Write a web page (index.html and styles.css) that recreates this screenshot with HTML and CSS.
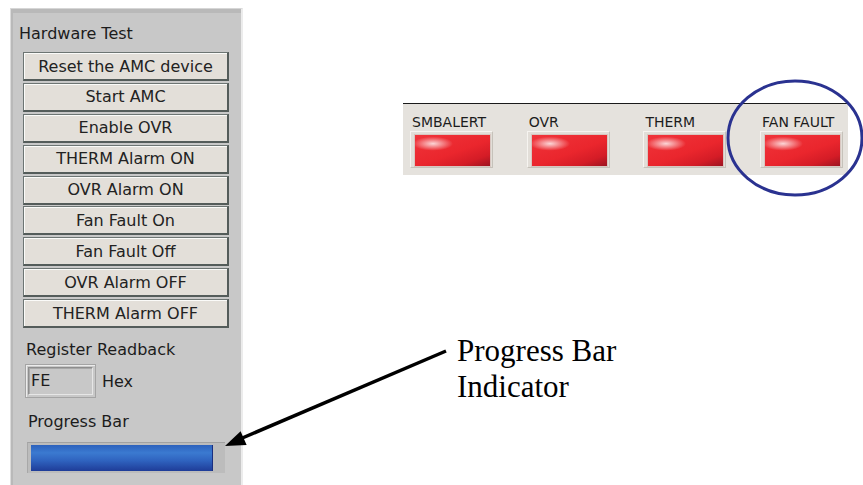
FILE: index.html
```html
<!DOCTYPE html>
<html lang="en">
<head>
    <meta charset="UTF-8">
    <title>Hardware Test</title>
    <link rel="stylesheet" href="styles.css">
</head>
<body>

<div class="panel">
    <div class="title">Hardware Test</div>
    <div class="buttons">
        <button>Reset the AMC device</button>
        <button>Start AMC</button>
        <button>Enable OVR</button>
        <button>THERM Alarm ON</button>
        <button>OVR Alarm ON</button>
        <button>Fan Fault On</button>
        <button>Fan Fault Off</button>
        <button>OVR Alarm OFF</button>
        <button>THERM Alarm OFF</button>
    </div>
    <div class="label readback">Register Readback</div>
    <div class="readrow">
        <div class="textbox"><div class="textbox-inner">FE</div></div>
        <span class="unit">Hex</span>
    </div>
    <div class="label progress-label">Progress Bar</div>
    <div class="track"><div class="fill"></div></div>
</div>

<div class="right">
    <div class="statusbar">
        <div class="cell"><div class="led-label">SMBALERT</div><div class="led-frame"><div class="led"></div></div></div>
        <div class="cell"><div class="led-label">OVR</div><div class="led-frame"><div class="led"></div></div></div>
        <div class="cell"><div class="led-label">THERM</div><div class="led-frame"><div class="led"></div></div></div>
        <div class="cell"><div class="led-label">FAN FAULT</div><div class="led-frame"><div class="led"></div></div></div>
    </div>
    <div class="note">Progress Bar<br>Indicator</div>
</div>

<svg class="overlay" width="863" height="485" viewBox="0 0 863 485">
    <ellipse cx="795" cy="138" rx="67" ry="57" fill="none" stroke="#2a3290" stroke-width="3"/>
    <line x1="446" y1="351" x2="240" y2="439" stroke="#000" stroke-width="3.5"/>
    <polygon points="225,446 240.6,431.2 246.6,445" fill="#000"/>
</svg>

</body>
</html>
```

FILE: styles.css
```css
body {
    margin: 0;
    width: 863px;
    height: 485px;
    overflow: hidden;
    position: relative;
    background: #fff;
    display: flex;
    align-items: flex-start;
    font-family: "DejaVu Sans", sans-serif;
    color: #1c1c1c;
}
.panel {
    flex-shrink: 0;
    margin: 8px 0 0 10px;
    width: 233px;
    height: 477px;
    box-sizing: border-box;
    background: #c8c8c8;
    border-top: 1px solid #d6d6d6;
    border-left: 1px solid #dcdcdc;
    border-right: 2px solid #ececec;
    box-shadow: inset 2px 4px 0 #b9b9b9;
    padding: 15.5px 0 0 8px;
    display: flex;
    flex-direction: column;
    align-items: flex-start;
}
.title, .label {
    font-size: 16px;
    line-height: 18px;
}
.buttons {
    margin: 9.5px 0 0 4px;
    width: 206px;
    display: flex;
    flex-direction: column;
    gap: 1.9px;
}
.buttons button {
    height: 29px;
    margin: 0;
    padding: 0;
    font-family: "DejaVu Sans", sans-serif;
    font-size: 16px;
    color: #222;
    background: #e3dfd9;
    border: 1px solid #6d7573;
    border-right: 2px solid #545c5a;
    border-bottom: 2px solid #545c5a;
    box-shadow: inset 1px 1px 0 #fbfbf9;
}
.readback {
    margin: 13.3px 0 0 7px;
}
.readrow {
    margin: 4.5px 0 0 6px;
    display: flex;
    align-items: center;
    gap: 6px;
}
.textbox {
    width: 71px;
    height: 34px;
    box-sizing: border-box;
    border: 1px solid #a4a4a4;
    box-shadow: inset 1px 1px 0 #ececec;
    padding: 2px;
}
.textbox-inner {
    height: 100%;
    box-sizing: border-box;
    border: 1px solid #8e8e8e;
    border-right-color: #e6e6e6;
    border-bottom-color: #e6e6e6;
    box-shadow: inset 1px 1px 0 #a8a8a8;
    font-size: 16px;
    line-height: 26px;
    padding-left: 2px;
}
.unit {
    font-size: 16px;
    margin-top: 2px;
}
.progress-label {
    margin: 15.5px 0 0 9px;
}
.track {
    margin: 10.5px 0 0 8px;
    width: 198px;
    height: 31px;
    box-sizing: border-box;
    background: #bcbcbc;
    border-top: 1px solid #a2a2a2;
    border-left: 1px solid #a8a8a8;
    padding: 2px 0 0 3px;
}
.fill {
    width: 181px;
    height: 26px;
    background: linear-gradient(#2d62bd, #3b7ad0 30%, #2f63bf 60%, #1f3c98);
    border-right: 1px solid #1a2f80;
}
.right {
    flex-shrink: 0;
    margin: 103px 0 0 160px;
    display: flex;
    flex-direction: column;
}
.statusbar {
    width: 445px;
    height: 72px;
    box-sizing: border-box;
    background: #e5e2dd;
    border-top: 1px solid #1a1a1a;
    padding: 9.5px 0 0 7px;
    display: flex;
    overflow: hidden;
}
.cell {
    flex-shrink: 0;
    width: 116.7px;
}
.led-label {
    font-size: 14px;
    line-height: 16px;
    margin-left: 2px;
    color: #1c1c1c;
}
.led-frame {
    margin-top: 1.5px;
    width: 83px;
    height: 37px;
    box-sizing: border-box;
    padding: 2px 0 0 3px;
    background: #e2ded8;
    border: 1px solid #f6f4f0;
    border-right-color: #c6c2ba;
    border-bottom-color: #c6c2ba;
}
.led {
    width: 77px;
    height: 33px;
    box-sizing: border-box;
    border: 1px solid #d8c6c0;
    background:
        radial-gradient(ellipse 20px 7px at 24% 28%, rgba(255, 255, 255, 0.8), rgba(255, 255, 255, 0)),
        linear-gradient(160deg, #f0343a 0%, #ea262d 55%, #d41c26 80%, #9c1420 100%);
}
.note {
    margin: 157.5px 0 0 54px;
    font-family: "Liberation Serif", serif;
    font-size: 31px;
    line-height: 36px;
    color: #000;
}
.overlay {
    position: absolute;
    left: 0;
    top: 0;
    pointer-events: none;
}
```
